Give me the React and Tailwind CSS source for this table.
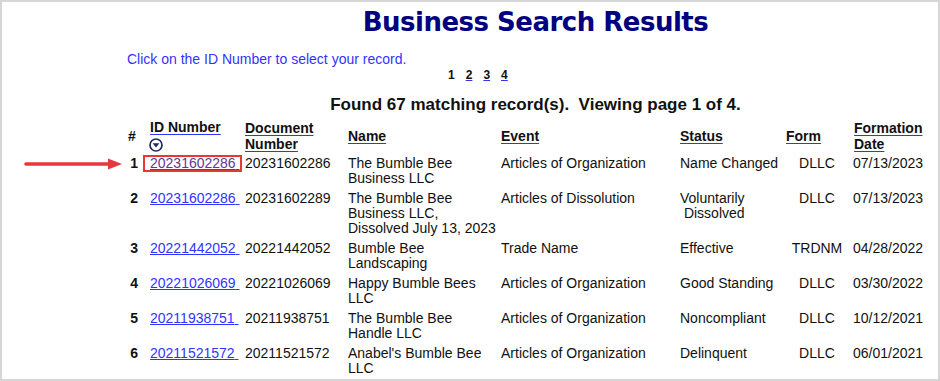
import React from 'react';

const rows = [
    { n: 1, id: '20231602286', doc: '20231602286', name: ['The Bumble Bee', 'Business LLC'], event: 'Articles of Organization', status: ['Name Changed'], form: 'DLLC', date: '07/13/2023', visited: true },
    { n: 2, id: '20231602286', doc: '20231602289', name: ['The Bumble Bee', 'Business LLC,', 'Dissolved July 13, 2023'], event: 'Articles of Dissolution', status: ['Voluntarily', '\u00a0Dissolved'], form: 'DLLC', date: '07/13/2023' },
    { n: 3, id: '20221442052', doc: '20221442052', name: ['Bumble Bee', 'Landscaping'], event: 'Trade Name', status: ['Effective'], form: 'TRDNM', date: '04/28/2022' },
    { n: 4, id: '20221026069', doc: '20221026069', name: ['Happy Bumble Bees', 'LLC'], event: 'Articles of Organization', status: ['Good Standing'], form: 'DLLC', date: '03/30/2022' },
    { n: 5, id: '20211938751', doc: '20211938751', name: ['The Bumble Bee', 'Handle LLC'], event: 'Articles of Organization', status: ['Noncompliant'], form: 'DLLC', date: '10/12/2021' },
    { n: 6, id: '20211521572', doc: '20211521572', name: ["Anabel's Bumble Bee", 'LLC'], event: 'Articles of Organization', status: ['Delinquent'], form: 'DLLC', date: '06/01/2021' },
];

function SortIcon() {
    return (
        <svg className="block mt-[3px] -ml-[1px]" width="14" height="14" viewBox="0 0 14 14">
            <circle cx="7" cy="7" r="6" fill="none" stroke="#1f2d5c" strokeWidth="1.7" />
            <path d="M3.6 5.3 L10.4 5.3 L7 9.4 Z" fill="#1f2d5c" />
        </svg>
    );
}

function HeaderLink({ children }) {
    return <span className="underline decoration-[#3333ff] underline-offset-[2px]">{children}</span>;
}

export default function App() {
    const hd = 'px-0 align-middle text-left font-bold leading-[16px]';
    const td = 'py-[2.5px] align-top leading-[15px]';

    return (
        <div className="relative w-[940px] h-[381px] overflow-hidden border-2 border-[#d6d6d6] bg-white text-[#111] font-['Liberation_Sans',Arial,sans-serif]">
            <div className="ml-[125px] w-[817px]">
                <h1 className="pt-[5px] text-center text-[26px] leading-[30px] tracking-[-0.5px] font-bold text-[#000080] font-['DejaVu_Sans',Verdana,sans-serif]">
                    Business Search Results
                </h1>

                <p className="mt-[14px] text-[14px] leading-[16px] text-[#3333ff]">
                    Click on the ID Number to select your record.
                </p>

                <div className="mt-[1px] pl-[321px] flex gap-[11px] text-[12px] leading-[14px] font-bold">
                    <span>1</span>
                    <span className="underline decoration-[#3333ff]">2</span>
                    <span className="underline decoration-[#3333ff]">3</span>
                    <span className="underline decoration-[#3333ff]">4</span>
                </div>

                <p className="mt-[13px] text-center text-[17px] leading-[20px] font-bold whitespace-pre">
                    Found 67 matching record(s).  Viewing page 1 of 4.
                </p>

                <table className="mt-[2.5px] table-fixed border-collapse text-[14px] w-[803px]">
                    <colgroup>
                        <col className="w-[21px]" />
                        <col className="w-[96px]" />
                        <col className="w-[102px]" />
                        <col className="w-[153px]" />
                        <col className="w-[179px]" />
                        <col className="w-[106px]" />
                        <col className="w-[66px]" />
                        <col className="w-[80px]" />
                    </colgroup>
                    <thead>
                        <tr className="h-[36px]">
                            <th className={`${hd} text-center pl-[1px]`}>#</th>
                            <th className={`${hd} pl-[2px]`}>
                                <HeaderLink>ID Number</HeaderLink>
                                <SortIcon />
                            </th>
                            <th className={`${hd} pl-[1px]`}>
                                <HeaderLink>Document<br />Number</HeaderLink>
                            </th>
                            <th className={`${hd} pl-[2px]`}><HeaderLink>Name</HeaderLink></th>
                            <th className={`${hd} pl-[2px]`}><HeaderLink>Event</HeaderLink></th>
                            <th className={`${hd} pl-[2px]`}><HeaderLink>Status</HeaderLink></th>
                            <th className={`${hd} pl-[2px]`}><HeaderLink>Form</HeaderLink></th>
                            <th className={`${hd} pl-[4px]`}>
                                <HeaderLink>Formation<br />Date</HeaderLink>
                            </th>
                        </tr>
                    </thead>
                    <tbody>
                        {rows.map((r) => (
                            <tr key={r.n}>
                                <td className={`${td} text-right pr-[10px] font-bold`}>{r.n}</td>
                                <td className={`${td} relative pl-[2px]`}>
                                    <span className={r.visited ? 'underline text-[#663399] decoration-[#663399]' : 'underline text-[#3333ff]'}>
                                        {r.id}&nbsp;
                                    </span>
                                    {r.visited && (
                                        <span className="absolute left-[-5px] top-[1px] w-[99px] h-[17px] border-2 border-[#e53935]" />
                                    )}
                                </td>
                                <td className={`${td} pl-[1px]`}>{r.doc}</td>
                                <td className={`${td} pl-[2px]`}>
                                    {r.name.map((l, i) => <div key={i}>{l}</div>)}
                                </td>
                                <td className={`${td} pl-[2px]`}>{r.event}</td>
                                <td className={`${td} pl-[2px] whitespace-pre`}>
                                    {r.status.map((l, i) => <div key={i}>{l}</div>)}
                                </td>
                                <td className={`${td} text-center`}>{r.form}</td>
                                <td className={`${td} pl-[3px]`}>{r.date}</td>
                            </tr>
                        ))}
                    </tbody>
                </table>
            </div>

            {/* annotation arrow pointing at the first record */}
            <svg className="absolute left-[22px] top-[155px]" width="100" height="14" viewBox="0 0 100 14">
                <line x1="2" y1="7" x2="86" y2="7" stroke="#e8383d" strokeWidth="3.6" strokeLinecap="round" />
                <path d="M84 1.5 L98 7 L84 12.5 Z" fill="#e8383d" />
            </svg>
        </div>
    );
}
